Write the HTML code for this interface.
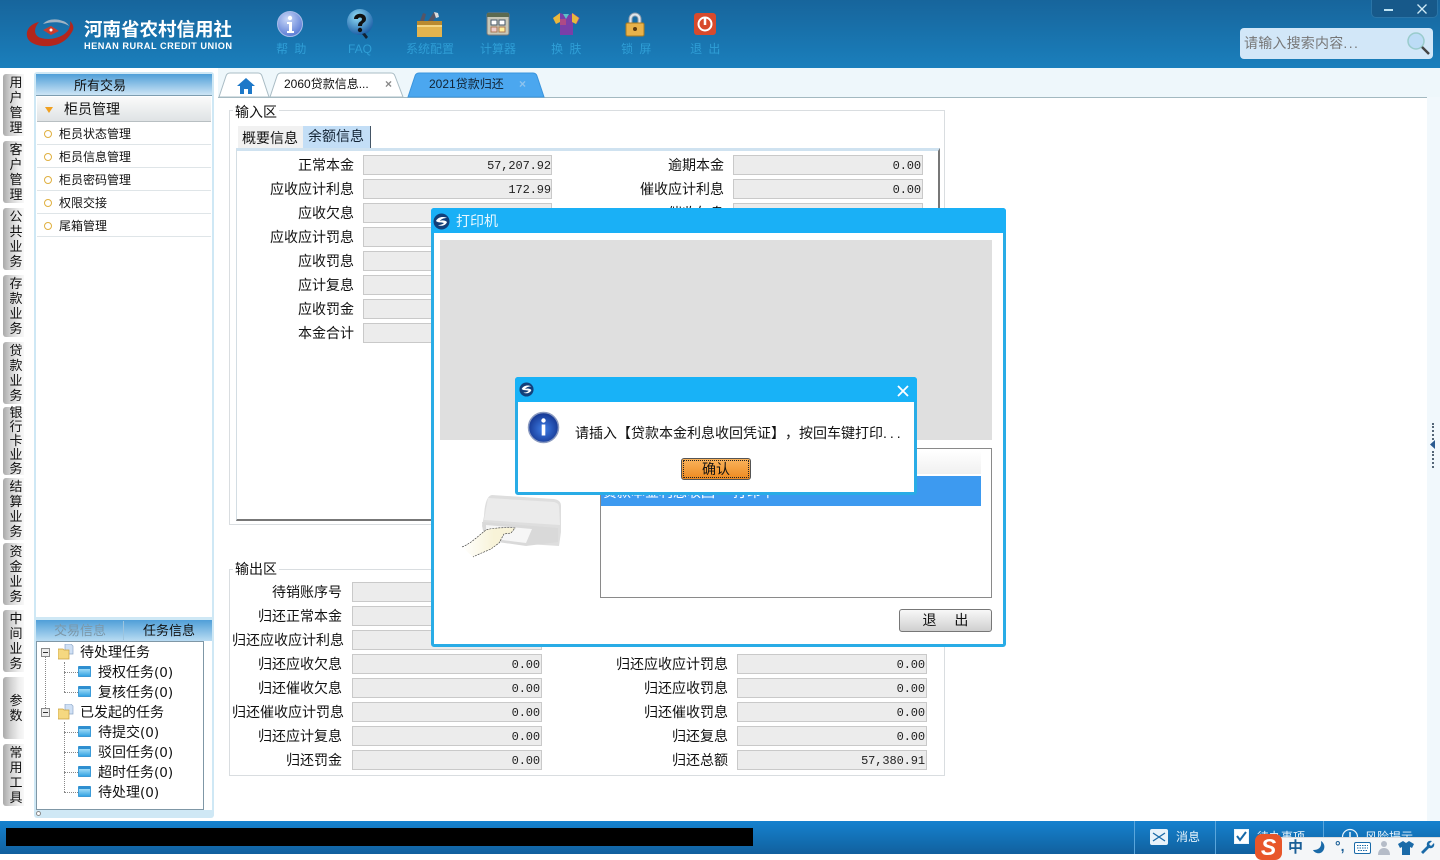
<!DOCTYPE html>
<html lang="zh"><head><meta charset="utf-8"><title>河南省农村信用社</title>
<style>
html,body{margin:0;padding:0;width:1440px;height:860px;overflow:hidden;background:#fff}
body{position:relative;font:14px/20px "Liberation Sans","Noto Sans CJK SC",sans-serif;color:#111;text-spacing-trim:space-all}
div,span,svg{position:absolute;box-sizing:border-box}
b{font-weight:400}
em{font-style:normal;font-family:"DejaVu Sans",sans-serif;font-size:13.500px}
.top{top:41px;width:60px;text-align:center;font-size:12px;line-height:16px;color:#2f9ed6}
.vt{left:3px;width:21px;background:linear-gradient(90deg,#a9a9a9,#d0d0d0 35%,#eee 75%,#f8f8f8);border-radius:3px 0 0 3px;font-size:13px;line-height:15px;text-align:center;color:#111;display:flex;align-items:center;justify-content:center;padding-left:5px}
.vt i{font-style:normal;width:14px;display:block}
.mi{left:37px;width:174px;height:23px;border-bottom:1px solid #dfe5e8;font-size:12px;line-height:24px;padding-left:22px}
.mi:before{content:"";position:absolute;left:7px;top:8px;width:6px;height:6px;border:1px solid #e0b040;border-radius:50%}
.t{font-size:14px;line-height:20px;white-space:nowrap}
.l{text-align:right;width:130px;font-size:14px;line-height:20px;white-space:nowrap}
.f{height:20px;background:#ececec;border:1px solid #c9c9c9;text-align:right;font:12px/20px "Liberation Mono",monospace;padding-right:0;color:#222;letter-spacing:-.1px}
.a{width:189px;left:363px}.b{width:190px;left:733px;padding-right:1px}.c{width:190px;left:352px;padding-right:1px}.d{width:190px;left:737px;padding-right:1px}
.fs{border:1px solid #d9dde0}
.dash{border-left:1px dotted #888;width:1px}
.dh{border-top:1px dotted #888;height:1px}
.fold{width:13px;height:11px;background:linear-gradient(#9fdcf8,#36a4e2);border:1px solid #3c9bd8;border-top:3px solid #2f8fd0;border-radius:1px}
</style></head><body>

<!-- header -->
<div style="left:0;top:0;width:1440px;height:68px;background:linear-gradient(#17659c,#1a7fbc)"></div>
<svg style="left:25px;top:16px" width="52" height="36" viewBox="0 0 52 36"><path d="M14 6C5 8 1 14 2 20c1 7 11 11 23 10 10-1 18-6 23-16 1-3 0-6-3-9 1 5-1 10-7 14-7 4-15 5-22 3-7-2-8-9-2-16z" fill="#b3261c"/><path d="M18 8c4-5 13-6 20-3 3 1 5 3 6 5-6-4-15-5-26-2z" fill="#9fb4c4"/><path d="M18 14l8-4 8 5-8 4z" fill="#c93c2c"/><circle cx="26" cy="14" r="1.500" fill="#fff"/></svg>
<div style="left:84px;top:17px;width:160px;color:#fff;font-size:18.500px;line-height:26px;font-weight:700;white-space:nowrap">河南省农村信用社</div>
<div style="left:84px;top:40px;color:#fff;font-size:9.200px;line-height:12px;font-weight:700;white-space:nowrap;letter-spacing:.52px">HENAN RURAL CREDIT UNION</div>

<svg style="left:276px;top:10px" width="28" height="28" viewBox="0 0 28 28"><defs><radialGradient id="g1" cx=".4" cy=".3" r=".8"><stop offset="0" stop-color="#c9d8f8"/><stop offset="1" stop-color="#4c6fd0"/></radialGradient></defs><circle cx="14" cy="14" r="12.500" fill="url(#g1)" stroke="#a8bce8"/><circle cx="14" cy="8" r="2.200" fill="#fff"/><path d="M11 12h5v9h2v2h-7v-2h2v-7h-2z" fill="#fff"/></svg>
<svg style="left:345px;top:9px" width="30" height="30" viewBox="0 0 30 30"><defs><radialGradient id="g2" cx=".4" cy=".3" r=".8"><stop offset="0" stop-color="#8fdcf6"/><stop offset="1" stop-color="#0f4f9c"/></radialGradient></defs><circle cx="15" cy="13" r="13" fill="url(#g2)"/><path d="M17 25l4 5 2-2-3-4z" fill="#123"/><path d="M9 10c0-7 12-7 12 0 0 4-4 3-4 7h-4c0-5 4-4 4-7 0-2-4-2-4 0z" fill="#111"/><circle cx="15" cy="21" r="2.200" fill="#111"/></svg>
<svg style="left:415px;top:10px" width="28" height="28" viewBox="0 0 28 28"><rect x="2" y="11" width="25" height="16" fill="#e2b44f"/><rect x="2" y="11" width="25" height="4" fill="#b98a30"/><rect x="2" y="15" width="25" height="2" fill="#f4d684"/><path d="M5 11l3-8 3 1-2 7zM13 11l6-9 4 2-5 7z" fill="#556"/><path d="M19 2l4 1 1 4-3 1z" fill="#ddd"/></svg>
<svg style="left:486px;top:12px" width="24" height="24" viewBox="0 0 24 24"><rect x="1" y="1" width="22" height="22" rx="2" fill="#c8c8b8" stroke="#777"/><rect x="1" y="1" width="22" height="4" fill="#5b6a50"/><rect x="5" y="8" width="6" height="5" fill="#fff" stroke="#456"/><rect x="13" y="8" width="6" height="5" fill="#fff" stroke="#456"/><rect x="5" y="15" width="6" height="5" fill="#ecc" stroke="#a75"/><rect x="13" y="15" width="6" height="5" fill="#fe9" stroke="#a75"/></svg>
<svg style="left:552px;top:11px" width="28" height="26" viewBox="0 0 28 26"><path d="M8 2L1 7l3 6 4-2v13h13V11l4 2 3-6-7-5-3 2h-4z" fill="#7a3fa8"/><path d="M8 2L1 7l3 6 4-2V7zM20 2l7 5-3 6-4-2V7z" fill="#e8b83c"/><path d="M11 3h6l-3 5z" fill="#5cc0c8"/><path d="M8 8h6v6H8z" fill="#d05070" opacity=".6"/></svg>
<svg style="left:623px;top:11px" width="24" height="26" viewBox="0 0 24 26"><path d="M6 12V8a6 6 0 0 1 12 0v4h-3V8a3 3 0 0 0-6 0v4z" fill="#dfe5ea" stroke="#89a"/><rect x="3" y="12" width="18" height="13" rx="1.500" fill="#e8b24a" stroke="#a87a20"/><circle cx="12" cy="18" r="2" fill="#5a3a10"/></svg>
<svg style="left:693px;top:12px" width="24" height="24" viewBox="0 0 24 24"><rect x="1" y="1" width="22" height="22" rx="3" fill="#d84a2c"/><circle cx="12" cy="12" r="6.500" fill="none" stroke="#fff" stroke-width="2"/><path d="M12 6v7" stroke="#fff" stroke-width="2.500"/></svg>
<div class="top" style="left:262px;letter-spacing:1.500px">帮 助</div><div class="top" style="left:330px">FAQ</div><div class="top" style="left:400px">系统配置</div><div class="top" style="left:468px">计算器</div><div class="top" style="left:537px;letter-spacing:1.500px">换 肤</div><div class="top" style="left:607px;letter-spacing:1.500px">锁 屏</div><div class="top" style="left:676px;letter-spacing:1.500px">退 出</div>

<div style="left:1371px;top:0;width:67px;height:18px;background:#17598a;border:1px solid #2a75a8;border-top:0;border-radius:0 0 5px 5px"></div>
<div style="left:1384px;top:9px;width:9px;height:2px;background:#bfe4f4"></div>
<svg style="left:1416px;top:3px" width="12" height="12" viewBox="0 0 12 12"><path d="M1.500 1.500l9 9M10.500 1.500l-9 9" stroke="#cfeaf6" stroke-width="1.300"/></svg>
<div style="left:1240px;top:28px;width:193px;height:31px;background:#d2e7f8;border-radius:4px;color:#777;font-size:14px;line-height:30px;padding-left:4px;letter-spacing:.2px">请输入搜索内容<span style="position:static;letter-spacing:1.400px">...</span></div>
<svg style="left:1405px;top:30px" width="26" height="26" viewBox="0 0 26 26"><circle cx="11" cy="11" r="8" fill="#bcdcf6" stroke="#9cc" stroke-width="1.500"/><path d="M17 17l7 7" stroke="#444" stroke-width="2.500"/></svg>

<!-- left vertical tabs -->
<div class="vt" style="top:74px;height:62px"><i>用户管理</i></div>
<div class="vt" style="top:141px;height:62px"><i>客户管理</i></div>
<div class="vt" style="top:208px;height:62px"><i>公共业务</i></div>
<div class="vt" style="top:275px;height:62px"><i>存款业务</i></div>
<div class="vt" style="top:342px;height:62px"><i>贷款业务</i></div>
<div class="vt" style="top:407px;height:68px"><i style="line-height:14px">银行卡业务</i></div>
<div class="vt" style="top:478px;height:62px"><i>结算业务</i></div>
<div class="vt" style="top:543px;height:62px"><i>资金业务</i></div>
<div class="vt" style="top:610px;height:62px"><i>中间业务</i></div>
<div class="vt" style="top:677px;height:62px"><i>参数</i></div>
<div class="vt" style="top:744px;height:62px"><i>常用工具</i></div>

<!-- left panel -->
<div style="left:34px;top:72px;width:180px;height:746px;background:#cfe8f5;border-radius:3px"></div>
<div style="left:36px;top:74px;width:176px;height:543px;background:#fff"></div>
<div style="left:36px;top:74px;width:176px;height:22px;background:linear-gradient(#4f9fd8,#cde5f5);border-bottom:1px solid #7d9db0;font-size:13px;line-height:24px;padding-left:38px;color:#111">所有交易</div>
<div style="left:37px;top:97px;width:174px;height:25px;background:linear-gradient(#fafafa,#dfe3e5);border-bottom:1px solid #b8bfc2;font-size:14px;line-height:25px;padding-left:27px">柜员管理</div>
<svg style="left:44px;top:107px" width="10" height="7" viewBox="0 0 10 7"><path d="M1 0h8L5 6z" fill="#f0a020"/></svg>
<div class="mi" style="top:122px">柜员状态管理</div>
<div class="mi" style="top:145px">柜员信息管理</div>
<div class="mi" style="top:168px">柜员密码管理</div>
<div class="mi" style="top:191px">权限交接</div>
<div class="mi" style="top:214px">尾箱管理</div>

<div style="left:36px;top:620px;width:176px;height:21px;background:linear-gradient(#4f9fd8,#b9dcf2)"></div>
<div style="left:123px;top:621px;width:1px;height:19px;background:#9cc4de"></div>
<div style="left:54px;top:621px;font-size:13px;line-height:20px;color:#7c97a8">交易信息</div>
<div style="left:143px;top:621px;font-size:13px;line-height:20px;color:#111">任务信息</div>
<div style="left:36px;top:641px;width:168px;height:169px;background:#fff;border:1px solid #7f97a6"></div>
<div style="left:204px;top:641px;width:8px;height:169px;background:#fff"></div>

<div class="dash" style="left:45px;top:656px;height:56px"></div>
<div class="dash" style="left:64px;top:662px;height:30px"></div>
<div class="dash" style="left:64px;top:722px;height:70px"></div>
<div class="dh" style="left:64px;top:672px;width:14px"></div><div class="dh" style="left:64px;top:692px;width:14px"></div>
<div class="dh" style="left:64px;top:732px;width:14px"></div><div class="dh" style="left:64px;top:752px;width:14px"></div><div class="dh" style="left:64px;top:772px;width:14px"></div><div class="dh" style="left:64px;top:792px;width:14px"></div>
<div style="left:41px;top:648px;width:9px;height:9px;background:#eee;border:1px solid #888"></div><div style="left:43px;top:652px;width:5px;height:1px;background:#333"></div>
<div style="left:41px;top:708px;width:9px;height:9px;background:#eee;border:1px solid #888"></div><div style="left:43px;top:712px;width:5px;height:1px;background:#333"></div>
<svg style="left:58px;top:644px" width="16" height="16" viewBox="0 0 16 16"><path d="M7 0h6l2 2v8H7z" fill="#cfe0f5" stroke="#8fa8c8" stroke-width=".7"/><path d="M0 5h5l1 1h5v9H0z" fill="#f5d880" stroke="#c8a040" stroke-width=".7"/></svg>
<svg style="left:58px;top:704px" width="16" height="16" viewBox="0 0 16 16"><path d="M7 0h6l2 2v8H7z" fill="#cfe0f5" stroke="#8fa8c8" stroke-width=".7"/><path d="M0 5h5l1 1h5v9H0z" fill="#f5d880" stroke="#c8a040" stroke-width=".7"/></svg>
<div class="fold" style="left:78px;top:666px"></div><div class="fold" style="left:78px;top:686px"></div><div class="fold" style="left:78px;top:726px"></div><div class="fold" style="left:78px;top:746px"></div><div class="fold" style="left:78px;top:766px"></div><div class="fold" style="left:78px;top:786px"></div>
<div class="t" style="left:80px;top:642px">待处理任务</div>
<div class="t" style="left:98px;top:662px">授权任务<em>(0)</em></div>
<div class="t" style="left:98px;top:682px">复核任务<em>(0)</em></div>
<div class="t" style="left:80px;top:702px">已发起的任务</div>
<div class="t" style="left:98px;top:722px">待提交<em>(0)</em></div>
<div class="t" style="left:98px;top:742px">驳回任务<em>(0)</em></div>
<div class="t" style="left:98px;top:762px">超时任务<em>(0)</em></div>
<div class="t" style="left:98px;top:782px">待处理<em>(0)</em></div>
<div style="left:36px;top:811px;width:5px;height:5px;border:1px solid #888;border-radius:50%;background:#fff"></div>

<!-- tabs bar -->
<div style="left:218px;top:68px;width:1222px;height:29px;background:#eef7fb"></div>
<div style="left:218px;top:97px;width:1209px;height:1px;background:#a3b9c0"></div>
<div style="left:1427px;top:97px;width:13px;height:724px;background:#f1f8fc"></div>
<svg style="left:218px;top:72px" width="330" height="26" viewBox="0 0 330 26"><path d="M1 25L8 4q1-3 4-3h28q3 0 4 3l7 21z" fill="#fff" stroke="#a9bcc4"/><path d="M52 25L59 4q1-3 4-3h110q3 0 4 3l8 21z" fill="#fff" stroke="#a9bcc4"/><path d="M190 25L197 4q1-3 4-3h114q3 0 4 3l7 21z" fill="#4ba7ef" stroke="#3a94dc"/></svg>
<svg style="left:237px;top:78px" width="18" height="16" viewBox="0 0 18 16"><path d="M9 0L0 8h3v8h4v-5h4v5h4V8h3z" fill="#1d78c8"/></svg>
<div style="left:284px;top:74px;font-size:12px;line-height:20px;white-space:nowrap">2060贷款信息...</div>
<div style="left:385px;top:74px;font-size:12px;line-height:20px;color:#888;font-weight:700">×</div>
<div style="left:429px;top:74px;font-size:12px;line-height:20px;white-space:nowrap;color:#123">2021贷款归还</div>
<div style="left:519px;top:74px;font-size:12px;line-height:20px;color:#8fc4ee;font-weight:700">×</div>
<div style="left:1432px;top:423px;width:3px;height:17px;border-left:2px dotted #567"></div>
<div style="left:1432px;top:451px;width:3px;height:17px;border-left:2px dotted #567"></div>
<svg style="left:1430px;top:440px" width="6" height="9" viewBox="0 0 6 9"><path d="M5 0L0 4.500 5 9z" fill="#2a5a90"/></svg>

<!-- input area -->
<div class="fs" style="left:229px;top:110px;width:716px;height:415px"></div>
<div class="t" style="left:233px;top:102px;background:#fff;padding:0 2px">输入区</div>
<div style="left:238px;top:126px;width:65px;height:22px;background:#f1f1f1"></div>
<div class="t" style="left:242px;top:128px">概要信息</div>
<div style="left:303px;top:126px;width:68px;height:23px;background:#c3def6;border-right:1px solid #456"></div>
<div class="t" style="left:308px;top:126px;color:#123">余额信息</div>
<div style="left:236px;top:148px;width:704px;height:373px;background:#fff;border:1px solid #d3dde3;border-top:3px solid #cfe2f0;border-right:2px solid #777;border-bottom:2px solid #777"></div>

<div class="l" style="left:224px;top:155px">正常本金</div><div class="f a" style="top:155px">57,207.92</div><div class="l" style="left:594px;top:155px">逾期本金</div><div class="f b" style="top:155px">0.00</div>
<div class="l" style="left:224px;top:179px">应收应计利息</div><div class="f a" style="top:179px">172.99</div><div class="l" style="left:594px;top:179px">催收应计利息</div><div class="f b" style="top:179px">0.00</div>
<div class="l" style="left:224px;top:203px">应收欠息</div><div class="f a" style="top:203px"></div><div class="l" style="left:594px;top:203px">催收欠息</div><div class="f b" style="top:203px"></div>
<div class="l" style="left:224px;top:227px">应收应计罚息</div><div class="f a" style="top:227px"></div>
<div class="l" style="left:224px;top:251px">应收罚息</div><div class="f a" style="top:251px"></div>
<div class="l" style="left:224px;top:275px">应计复息</div><div class="f a" style="top:275px"></div>
<div class="l" style="left:224px;top:299px">应收罚金</div><div class="f a" style="top:299px"></div>
<div class="l" style="left:224px;top:323px">本金合计</div><div class="f a" style="top:323px"></div>

<!-- output area -->
<div class="fs" style="left:229px;top:569px;width:716px;height:207px"></div>
<div class="t" style="left:233px;top:559px;background:#fff;padding:0 2px">输出区</div>
<div class="l" style="left:212px;top:582px">待销账序号</div><div class="f c" style="top:582px"></div>
<div class="l" style="left:212px;top:606px">归还正常本金</div><div class="f c" style="top:606px"></div>
<div class="l" style="left:214px;top:630px">归还应收应计利息</div><div class="f c" style="top:630px"></div>
<div class="l" style="left:212px;top:654px">归还应收欠息</div><div class="f c" style="top:654px">0.00</div>
<div class="l" style="left:212px;top:678px">归还催收欠息</div><div class="f c" style="top:678px">0.00</div>
<div class="l" style="left:214px;top:702px">归还催收应计罚息</div><div class="f c" style="top:702px">0.00</div>
<div class="l" style="left:212px;top:726px">归还应计复息</div><div class="f c" style="top:726px">0.00</div>
<div class="l" style="left:212px;top:750px">归还罚金</div><div class="f c" style="top:750px">0.00</div>
<div class="l" style="left:598px;top:654px">归还应收应计罚息</div><div class="f d" style="top:654px">0.00</div>
<div class="l" style="left:598px;top:678px">归还应收罚息</div><div class="f d" style="top:678px">0.00</div>
<div class="l" style="left:598px;top:702px">归还催收罚息</div><div class="f d" style="top:702px">0.00</div>
<div class="l" style="left:598px;top:726px">归还复息</div><div class="f d" style="top:726px">0.00</div>
<div class="l" style="left:598px;top:750px">归还总额</div><div class="f d" style="top:750px">57,380.91</div>

<!-- print dialog -->
<div style="left:431px;top:208px;width:575px;height:439px;background:#fff;border:3px solid #29ace6;border-radius:3px"></div>
<div style="left:431px;top:208px;width:575px;height:25px;background:#1ab0f6;border-radius:3px 3px 0 0"></div>
<svg style="left:433px;top:213px" width="17" height="17" viewBox="0 0 17 17"><circle cx="8.500" cy="8.500" r="8" fill="#123f7a"/><path d="M3 8c2-4 7-5 11-3-3 0-6 1-7 3 2-1 5-1 7 1-1 3-5 5-9 3 3 0 5-1 6-2-3-1-6 0-8-2z" fill="#fff"/></svg>
<div style="left:456px;top:211px;color:#e8f8ff;font-size:14px;line-height:20px">打印机</div>
<div style="left:440px;top:240px;width:552px;height:200px;background:#dfdfdf"></div>
<div style="left:600px;top:448px;width:392px;height:150px;border:1px solid #8a8a8a;background:#fff"></div>
<div style="left:601px;top:451px;width:380px;height:23px;background:linear-gradient(#fff,#f0f0f0)"></div>
<div style="left:601px;top:476px;width:380px;height:30px;background:#3d9af0"></div>
<div style="left:603px;top:482px;color:#fff;font-size:14px;line-height:20px;white-space:nowrap">贷款本金利息收回 　打印中</div>
<svg style="left:458px;top:490px" width="106" height="74" viewBox="0 0 106 74"><defs><linearGradient id="h" x1="0" x2="1"><stop offset="0" stop-color="#fff"/><stop offset=".6" stop-color="#f8f3d8"/></linearGradient></defs>
<path d="M26 26q1-20 8-21l62 4q7 1 7 7v26l-2 14-32-2-42-6-3-12z" fill="#dedede"/>
<path d="M30 8l66 4q5 1 5 5l1 18-76-5z" fill="#ebebeb"/>
<path d="M24 32l76 6v14l-32 4-42-6z" fill="#d9d9d9"/>
<path d="M28 35l46 4-6 14-40-5z" fill="#f6f6f6"/>
<path d="M4 57c10-4 17-12 24-17 5-2 22-3 29-2l-4 5-7 1-5 9-8 6-14 6-4 2z" fill="url(#h)"/>
<path d="M4 57c10-4 17-12 24-17 5-2 22-3 29-2l-4 5-7 1-5 9-8 6-14 6-4 2" fill="none" stroke="#333" stroke-width=".6" stroke-dasharray="2 1"/></svg>
<div style="left:899px;top:609px;width:93px;height:23px;border:1px solid #777;border-radius:3px;background:linear-gradient(#f8f8f8,#cfcfcf);text-align:center;font-size:14px;line-height:21px;color:#111">退　 出</div>

<!-- message dialog -->
<div style="left:515px;top:377px;width:402px;height:118px;background:#fff;border:3px solid #29ace6;border-radius:3px"></div>
<div style="left:515px;top:377px;width:402px;height:25px;background:#18b2f7;border-radius:3px 3px 0 0"></div>
<svg style="left:519px;top:382px" width="15" height="15" viewBox="0 0 17 17"><circle cx="8.500" cy="8.500" r="8" fill="#123f7a"/><path d="M3 8c2-4 7-5 11-3-3 0-6 1-7 3 2-1 5-1 7 1-1 3-5 5-9 3 3 0 5-1 6-2-3-1-6 0-8-2z" fill="#fff"/></svg>
<svg style="left:897px;top:385px" width="12" height="12" viewBox="0 0 12 12"><path d="M1 1l10 10M11 1L1 11" stroke="#fff" stroke-width="1.800"/></svg>
<svg style="left:527px;top:411px" width="33" height="33" viewBox="0 0 33 33"><defs><radialGradient id="g3" cx=".5" cy=".55" r=".55"><stop offset="0" stop-color="#3f7fe8"/><stop offset="1" stop-color="#15358f"/></radialGradient></defs><circle cx="16.500" cy="16.500" r="15" fill="url(#g3)" stroke="#8a9ac0" stroke-width="1.500"/><circle cx="16.500" cy="9.500" r="2.200" fill="#fff"/><rect x="14.700" y="13.500" width="3.600" height="11" fill="#fff"/></svg>
<div style="left:575px;top:423px;font-size:14px;line-height:20px;white-space:nowrap">请插入【贷款本金利息收回凭证】，按回车键打印<span style="position:static;letter-spacing:3px">...</span></div>
<div style="left:681px;top:458px;width:70px;height:22px;background:linear-gradient(#f9b35c,#ee8a20);border:1px solid #555;border-radius:3px;outline:1px dotted #222;outline-offset:-3px;text-align:center;font-size:14px;line-height:20px">确认</div>

<!-- status bar -->
<div style="left:0;top:821px;width:1440px;height:33px;background:linear-gradient(#1582cf,#11609e)"></div>
<div style="left:6px;top:828px;width:747px;height:18px;background:#000"></div>
<div style="left:1134px;top:821px;width:1px;height:33px;background:#5aa6dc"></div>
<div style="left:1215px;top:821px;width:1px;height:33px;background:#5aa6dc"></div>
<div style="left:1323px;top:821px;width:1px;height:33px;background:#5aa6dc"></div>
<div style="left:1150px;top:829px;width:18px;height:16px;background:#e8f2fa;border-radius:2px"></div>
<svg style="left:1150px;top:829px" width="18" height="16" viewBox="0 0 18 16"><path d="M3 4l6 4 6-4M3 12l6-4 6 4" stroke="#1a6aa8" fill="none" stroke-width="1.300"/></svg>
<div style="left:1176px;top:827px;color:#e8f4fc;font-size:12px;line-height:20px">消息</div>
<div style="left:1234px;top:829px;width:15px;height:15px;border:1px solid #eaf4fb;background:#fff"></div>
<svg style="left:1235px;top:830px" width="13" height="13" viewBox="0 0 13 13"><path d="M2 6l3 4 6-8" stroke="#1668a8" fill="none" stroke-width="2"/></svg>
<div style="left:1257px;top:827px;color:#e8f4fc;font-size:12px;line-height:20px;white-space:nowrap">待办事项</div>
<svg style="left:1341px;top:828px" width="18" height="18" viewBox="0 0 18 18"><circle cx="9" cy="9" r="7.500" fill="none" stroke="#e8f4fc" stroke-width="1.200"/><path d="M9 4v6" stroke="#e8f4fc" stroke-width="1.500"/></svg>
<div style="left:1365px;top:827px;color:#e8f4fc;font-size:12px;line-height:20px;white-space:nowrap">风险提示</div>
<div style="left:1272px;top:837px;width:168px;height:23px;background:#f4f6f8;border-top:1px solid #ddd"></div>
<div style="left:1255px;top:834px;width:27px;height:26px;background:#e8562a;border-radius:7px;color:#fff;font:italic 700 23px/26px 'Liberation Sans',sans-serif;text-align:center">S</div>
<div style="left:1288px;top:838px;font-size:15px;line-height:20px;font-weight:700;color:#1a5e96">中</div>
<svg style="left:1312px;top:840px" width="14" height="15" viewBox="0 0 14 15"><path d="M9 1c1 6-2 9-8 9 2 4 9 5 11-1 1-3 0-6-3-8z" fill="#1a6aa8"/></svg>
<div style="left:1335px;top:838px;font-size:14px;line-height:16px;font-weight:700;color:#1a5e96">°,</div>
<svg style="left:1354px;top:842px" width="17" height="12" viewBox="0 0 17 12"><rect x=".5" y=".5" width="16" height="11" rx="1.500" fill="#fff" stroke="#1a6aa8"/><path d="M3 3.500h11M3 6h11M4 8.500h9" stroke="#1a6aa8" stroke-dasharray="1.500 1"/></svg>
<svg style="left:1377px;top:840px" width="14" height="16" viewBox="0 0 14 16"><circle cx="7" cy="4" r="3" fill="#b5bcc8"/><path d="M1 15c0-5 3-7 6-7s6 2 6 7z" fill="#b5bcc8"/></svg>
<svg style="left:1398px;top:841px" width="16" height="14" viewBox="0 0 16 14"><path d="M5 0L0 3l2 4 2-1v8h8V6l2 1 2-4-5-3-3 2z" fill="#1a6aa8"/></svg>
<svg style="left:1420px;top:840px" width="15" height="15" viewBox="0 0 15 15"><path d="M14 3l-3 3-2-2 3-3c-3-1-6 1-5 5L1 12l2 2 6-6c4 1 6-2 5-5z" fill="#1a6aa8"/></svg>
</body></html>
